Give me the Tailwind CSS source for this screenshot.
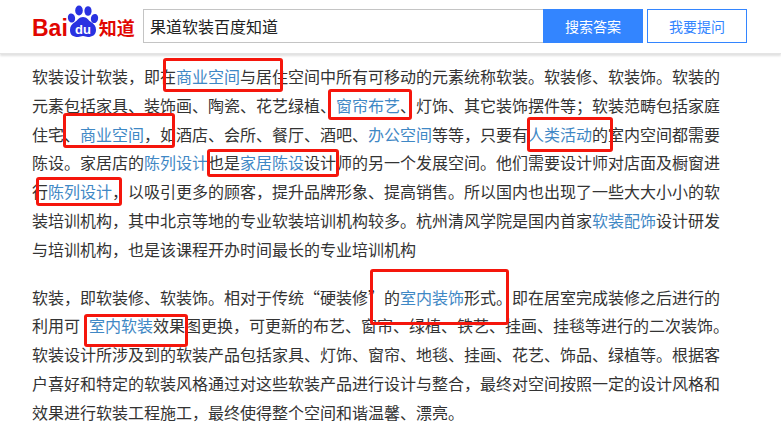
<!DOCTYPE html>
<html lang="zh-CN">
<head>
    <meta charset="UTF-8">
    <title>果道软装百度知道</title>
    <script src="https://cdn.jsdelivr.net/npm/@tailwindcss/browser@4"></script>
</head>
<body class="relative h-[439px] overflow-hidden bg-white font-['Noto_Sans_CJK_SC',sans-serif] text-[#333]">
    <!-- Header -->
    <header class="flex h-[54px] items-start border-b border-[#e4e4e4] pt-[9px] pl-[32px] shadow-[0_2px_2px_rgba(0,0,0,0.12)]">
        <div class="flex h-[34px] w-[111px] items-start">
            <span class="mt-[6px] font-['Liberation_Sans',sans-serif] text-[23px] leading-[26px] font-bold text-[#e10601]">Bai</span>
            <svg class="-mt-[5px] -ml-px h-[34px] w-[32px] shrink-0" viewBox="0 0 32 34">
                <g fill="#2932e1">
                    <ellipse cx="4.5" cy="14" rx="3.6" ry="4.6" transform="rotate(-12 4.5 14)"/>
                    <ellipse cx="12" cy="6.5" rx="3.8" ry="5"/>
                    <ellipse cx="21" cy="7" rx="3.6" ry="4.8"/>
                    <ellipse cx="27.5" cy="14.5" rx="3.6" ry="4.6" transform="rotate(12 27.5 14.5)"/>
                    <path d="M16 13c4 0 5 3 8 5 3 2 5 4 5 8 0 5-4 7-8 7-2 0-3-1-5-1s-3 1-5 1c-5 0-8-2-8-7 0-4 2-6 5-8 3-2 4-5 8-5z"/>
                </g>
                <text x="16" y="30" text-anchor="middle" fill="#fff" font-family="Liberation Sans" font-size="13" font-weight="700">du</text>
            </svg>
            <span class="mt-[5px] text-[18px] leading-[26px] font-bold text-[#e10601]">知道</span>
        </div>
        <div class="flex h-[34px] w-[400px] items-center border border-r-0 border-[#c4c4c4] pl-[6px] text-[16px] text-[#222]">果道软装百度知道</div>
        <button class="flex h-[34px] w-[100px] items-center justify-center bg-[#3385ff] text-[14px] text-white">搜索答案</button>
        <button class="ml-[4px] flex h-[34px] w-[100px] items-center justify-center border border-[#3385ff] text-[14px] text-[#3385ff]">我要提问</button>
    </header>

    <!-- Answer text -->
    <main class="w-[732px] pt-[8px] pl-[32px] text-[16px] leading-[28.8px]">
        <p class="mb-[19px]">软装设计软装，即在<a class="text-[#3f88c5]">商业空间</a>与居住空间中所有可移动的元素统称软装。软装修、软装饰。软装的元素包括家具、装饰画、陶瓷、花艺绿植、<a class="text-[#3f88c5]">窗帘布艺</a>、灯饰、其它装饰摆件等；软装范畴包括家庭住宅、<a class="text-[#3f88c5]">商业空间</a>，如酒店、会所、餐厅、酒吧、<a class="text-[#3f88c5]">办公空间</a>等等，只要有<a class="text-[#3f88c5]">人类活动</a>的室内空间都需要陈设。家居店的<a class="text-[#3f88c5]">陈列设计</a>也是<a class="text-[#3f88c5]">家居陈设</a>设计师的另一个发展空间。他们需要设计师对店面及橱窗进行<a class="text-[#3f88c5]">陈列设计</a>，以吸引更多的顾客，提升品牌形象、提高销售。所以国内也出现了一些大大小小的软装培训机构，其中北京等地的专业软装培训机构较多。杭州清风学院是国内首家<a class="text-[#3f88c5]">软装配饰</a>设计研发与培训机构，也是该课程开办时间最长的专业培训机构</p>
        <p>软装，即软装修、软装饰。相对于传统“硬装修”的<a class="text-[#3f88c5]">室内装饰</a>形式。即在居室完成装修之后进行的利用可<a class="ml-[9px] text-[#3f88c5]">室内软装</a>效果图更换，可更新的布艺、窗帘、绿植、铁艺、挂画、挂毯等进行的二次装饰。软装设计所涉及到的软装产品包括家具、灯饰、窗帘、地毯、挂画、花艺、饰品、绿植等。根据客户喜好和特定的软装风格通过对这些软装产品进行设计与整合，最终对空间按照一定的设计风格和效果进行软装工程施工，最终使得整个空间和谐温馨、漂亮。</p>
    </main>

    <!-- Red annotation boxes drawn over the text -->
    <div class="absolute top-[58px] left-[163px] h-[34px] w-[120px] rounded-[3px] border-[3px] border-[#f5160c]"></div>
    <div class="absolute top-[89px] left-[328px] h-[31px] w-[84px] rounded-[3px] border-[3px] border-[#f5160c]"></div>
    <div class="absolute top-[113px] left-[63px] h-[35px] w-[112px] rounded-[3px] border-[3px] border-[#f5160c]"></div>
    <div class="absolute top-[117px] left-[527px] h-[35px] w-[86px] rounded-[3px] border-[3px] border-[#f5160c]"></div>
    <div class="absolute top-[149px] left-[207px] h-[28px] w-[132px] rounded-[3px] border-[3px] border-[#f5160c]"></div>
    <div class="absolute top-[177px] left-[36px] h-[29px] w-[86px] rounded-[3px] border-[3px] border-[#f5160c]"></div>
    <div class="absolute top-[269px] left-[370px] h-[56px] w-[139px] rounded-[3px] border-[3px] border-[#f5160c]"></div>
    <div class="absolute top-[314px] left-[84px] h-[33px] w-[104px] rounded-[3px] border-[3px] border-[#f5160c]"></div>
</body>
</html>
